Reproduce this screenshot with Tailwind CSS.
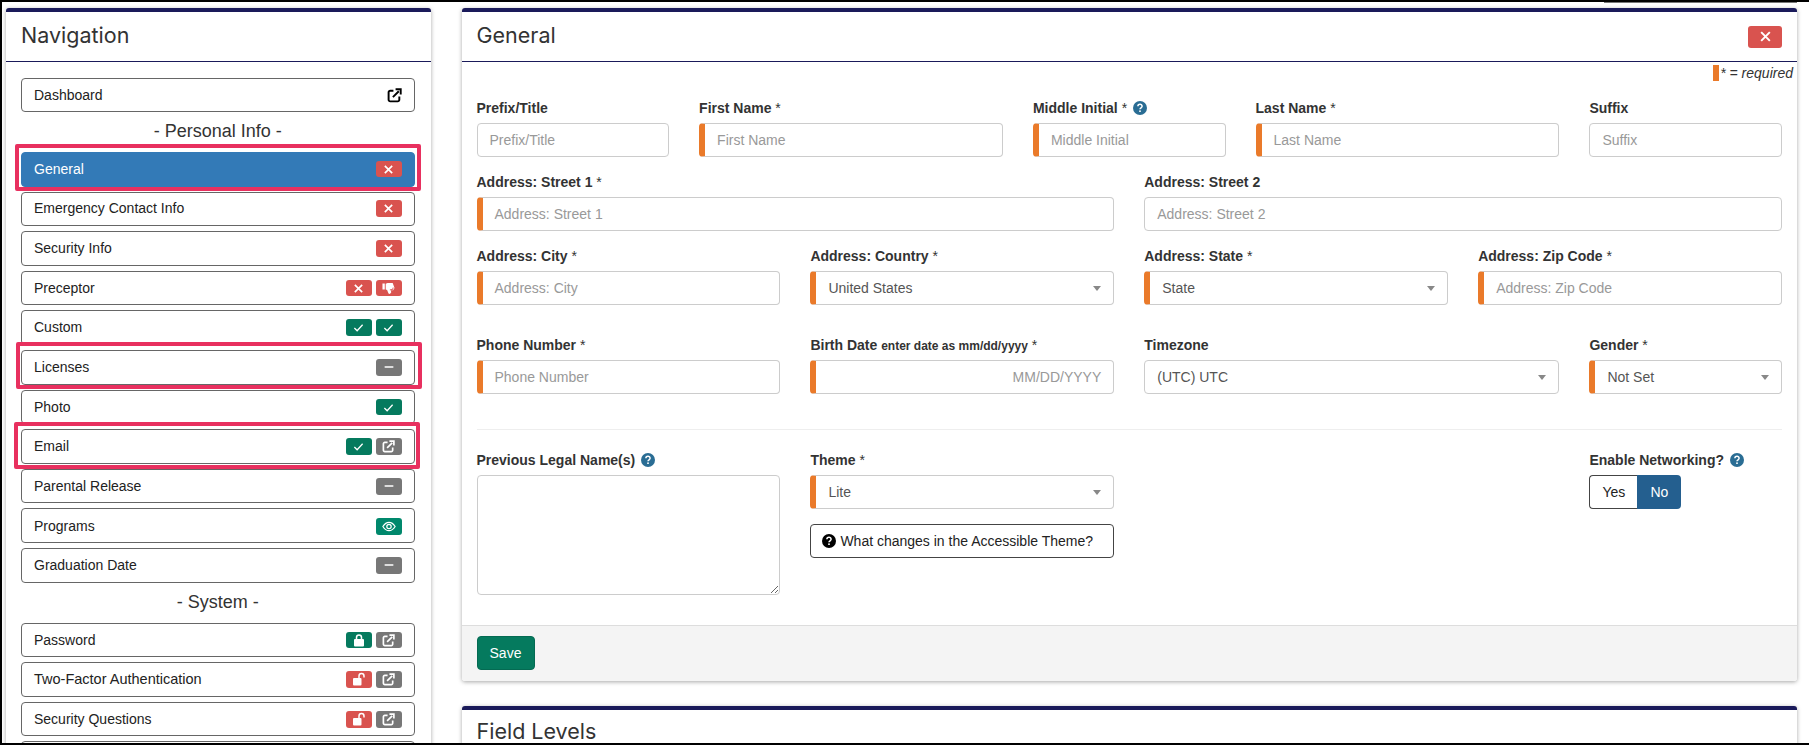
<!DOCTYPE html>
<html lang="en">

<head>
  <meta charset="UTF-8">
  <meta name="viewport" content="width=device-width, initial-scale=1.0">
  <title>Profile - General</title>
  <script src="https://cdn.jsdelivr.net/npm/@tailwindcss/browser@4"></script>
</head>

<body class="h-[745px] overflow-hidden bg-black font-['Liberation_Sans',Arial,sans-serif] text-[#222]">
  <svg class="hidden">
    <symbol id="i-x" viewBox="0 0 12 12"><path d="M2 2l8 8M10 2l-8 8" fill="none" stroke="currentColor" stroke-width="1.8"/></symbol>
    <symbol id="i-check" viewBox="0 0 12 12"><path d="M1.5 6.5l3 3 6-6.5" fill="none" stroke="currentColor" stroke-width="1.4"/></symbol>
    <symbol id="i-minus" viewBox="0 0 12 12"><path d="M1.5 6h9" fill="none" stroke="currentColor" stroke-width="2" stroke-linecap="round"/></symbol>
    <symbol id="i-ext" viewBox="0 0 14 14"><path d="M6 2.500H3A1.500 1.500 0 0 0 1.500 4v7A1.500 1.500 0 0 0 3 12.500h7a1.500 1.500 0 0 0 1.500-1.500V8" fill="none" stroke="currentColor" stroke-width="1.800"/><path d="M5.500 8.500L11 3M8 1.200h4.800V6" fill="none" stroke="currentColor" stroke-width="1.800"/></symbol>
    <symbol id="i-thumb" viewBox="0 0 14 14"><path d="M0.500 1.500h2.500v6.500H0.500zM4 2l2-1h5.500l2 5.500-1.500 2.500H9.500l.5 2-1.500 2-1.500-.5L5.500 8.500 4 8z" fill="currentColor"/><path d="M8.500 8.500l3-.5.500-2" stroke="#d9534f" fill="none"/></symbol>
    <symbol id="i-eye" viewBox="0 0 16 12"><path d="M1 6c2-3.200 4.400-4.800 7-4.800S13 2.800 15 6c-2 3.200-4.400 4.800-7 4.800S3 9.200 1 6z" fill="none" stroke="currentColor" stroke-width="1.400"/><circle cx="8" cy="6" r="2.500" fill="none" stroke="currentColor" stroke-width="1.400"/></symbol>
    <symbol id="i-lock" viewBox="0 0 12 14"><path d="M3.500 6.500V4.500a2.500 2.500 0 0 1 5 0v2" fill="none" stroke="currentColor" stroke-width="1.500"/><rect x="1" y="6" width="10" height="7.500" rx="1" fill="currentColor"/></symbol>
    <symbol id="i-unlock" viewBox="0 0 14 14"><path d="M7 6.500V4a2.500 2.500 0 0 1 5 0v1.500" fill="none" stroke="currentColor" stroke-width="1.500"/><rect x="1" y="6" width="8.500" height="7.500" rx="1" fill="currentColor"/></symbol>
    <symbol id="i-help" viewBox="0 0 14 14"><circle cx="7" cy="7" r="7" fill="currentColor"/><path d="M4.900 5.300A2.100 2 0 0 1 9.100 5.300c0 1.500-2.100 1.500-2.100 3" fill="none" stroke="#fff" stroke-width="1.500"/><rect x="6.200" y="9.400" width="1.600" height="1.600" fill="#fff"/></symbol>
  </svg>

  <div class="mt-[2px] ml-[2px] h-[741px] bg-white overflow-hidden relative flex">
    <div class="absolute top-0 right-[12px] w-[193px] h-[1px] bg-[#777]"></div>

    <!-- Navigation -->
    <aside class="ml-[3.500px] mt-[6px] w-[425px] shrink-0 h-[780px] bg-white rounded-t-[3px] border-t-[4px] border-[#1a1a5a] shadow-[0_1px_4px_rgba(0,0,0,0.35)]">
      <div class="h-[50px] border-b border-[#1a1a5a] pl-[15.500px] flex items-center">
        <h2 class="font-['Inter',sans-serif] text-[21.500px] leading-none text-[#333] relative -top-[1px]">Navigation</h2>
      </div>
      <div class="pl-[15.500px] pr-[16px] pt-[15.500px]">
        <a class="flex items-center justify-between h-[34px] px-[12px] pt-[1px] rounded-[4px] border border-[#666] text-[14px] text-[#222]">Dashboard
          <svg class="w-[15px] h-[15px] text-black"><use href="#i-ext"/></svg>
        </a>
        <h3 class="text-center text-[18px] leading-[39px] h-[40.500px] text-[#333]">- Personal Info -</h3>

        <div class="flex flex-col gap-[5px]">
          <div class="relative">
            <a class="flex items-center justify-between h-[34.600px] px-[12px] rounded-[4px] border border-[#337ab7] bg-[#337ab7] text-[14px] text-white">General
              <span class="flex gap-[4px]"><span class="flex w-[26px] h-[16px] items-center justify-center rounded-[3px] bg-[#d9534f] text-white"><svg class="w-[11px] h-[11px]"><use href="#i-x"/></svg></span></span>
            </a>
            <div class="absolute -top-[8.500px] -left-[6.500px] w-[406px] h-[47px] border-[4px] border-[#e8305f] rounded-[2px]"></div>
          </div>
          <a class="flex items-center justify-between h-[34.600px] px-[12px] rounded-[4px] border border-[#666] text-[14px]">Emergency Contact Info
            <span class="flex gap-[4px]"><span class="flex w-[26px] h-[17px] items-center justify-center rounded-[3px] bg-[#d9534f] text-white"><svg class="w-[11px] h-[11px]"><use href="#i-x"/></svg></span></span>
          </a>
          <a class="flex items-center justify-between h-[34.600px] px-[12px] rounded-[4px] border border-[#666] text-[14px]">Security Info
            <span class="flex gap-[4px]"><span class="flex w-[26px] h-[17px] items-center justify-center rounded-[3px] bg-[#d9534f] text-white"><svg class="w-[11px] h-[11px]"><use href="#i-x"/></svg></span></span>
          </a>
          <a class="flex items-center justify-between h-[34.600px] px-[12px] rounded-[4px] border border-[#666] text-[14px]">Preceptor
            <span class="flex gap-[4px]">
              <span class="flex w-[26px] h-[16px] items-center justify-center rounded-[3px] bg-[#d9534f] text-white"><svg class="w-[11px] h-[11px]"><use href="#i-x"/></svg></span>
              <span class="flex w-[26px] h-[16px] items-center justify-center rounded-[3px] bg-[#d9534f] text-white"><svg class="w-[13px] h-[13px]"><use href="#i-thumb"/></svg></span>
            </span>
          </a>
          <a class="flex items-center justify-between h-[34.600px] px-[12px] rounded-[4px] border border-[#666] text-[14px]">Custom
            <span class="flex gap-[4px]">
              <span class="flex w-[26px] h-[17px] items-center justify-center rounded-[3px] bg-[#057a5e] text-white"><svg class="w-[11px] h-[11px]"><use href="#i-check"/></svg></span>
              <span class="flex w-[26px] h-[17px] items-center justify-center rounded-[3px] bg-[#057a5e] text-white"><svg class="w-[11px] h-[11px]"><use href="#i-check"/></svg></span>
            </span>
          </a>
          <div class="relative">
            <a class="flex items-center justify-between h-[34.600px] px-[12px] rounded-[4px] border border-[#666] text-[14px]">Licenses
              <span class="flex gap-[4px]"><span class="flex w-[26px] h-[17px] items-center justify-center rounded-[3px] bg-[#777] text-white"><svg class="w-[10px] h-[10px]"><use href="#i-minus"/></svg></span></span>
            </a>
            <div class="absolute -top-[7.500px] -left-[5.500px] w-[406px] h-[47px] border-[4px] border-[#e8305f] rounded-[2px]"></div>
          </div>
          <a class="flex items-center justify-between h-[34.600px] px-[12px] pt-[1px] rounded-[4px] border border-[#666] text-[14px]">Photo
            <span class="flex gap-[4px]"><span class="flex w-[26px] h-[16px] items-center justify-center rounded-[3px] bg-[#057a5e] text-white"><svg class="w-[11px] h-[11px]"><use href="#i-check"/></svg></span></span>
          </a>
          <div class="relative">
            <a class="flex items-center justify-between h-[34.600px] px-[12px] rounded-[4px] border border-[#666] text-[14px]">Email
              <span class="flex gap-[4px]">
                <span class="flex w-[26px] h-[17px] items-center justify-center rounded-[3px] bg-[#057a5e] text-white"><svg class="w-[11px] h-[11px]"><use href="#i-check"/></svg></span>
                <span class="flex w-[26px] h-[17px] items-center justify-center rounded-[3px] bg-[#777] text-white"><svg class="w-[13px] h-[13px]"><use href="#i-ext"/></svg></span>
              </span>
            </a>
            <div class="absolute -top-[7.500px] -left-[7.500px] w-[406px] h-[47px] border-[4px] border-[#e8305f] rounded-[2px]"></div>
          </div>
          <a class="flex items-center justify-between h-[34.600px] px-[12px] rounded-[4px] border border-[#666] text-[14px]">Parental Release
            <span class="flex gap-[4px]"><span class="flex w-[26px] h-[17px] items-center justify-center rounded-[3px] bg-[#777] text-white"><svg class="w-[10px] h-[10px]"><use href="#i-minus"/></svg></span></span>
          </a>
          <a class="flex items-center justify-between h-[34.600px] px-[12px] pt-[1px] rounded-[4px] border border-[#666] text-[14px]">Programs
            <span class="flex gap-[4px]"><span class="flex w-[26px] h-[17px] items-center justify-center rounded-[3px] bg-[#00886c] text-white"><svg class="w-[14px] h-[11px]"><use href="#i-eye"/></svg></span></span>
          </a>
          <a class="flex items-center justify-between h-[34.600px] px-[12px] rounded-[4px] border border-[#666] text-[14px]">Graduation Date
            <span class="flex gap-[4px]"><span class="flex w-[26px] h-[17px] items-center justify-center rounded-[3px] bg-[#777] text-white"><svg class="w-[10px] h-[10px]"><use href="#i-minus"/></svg></span></span>
          </a>
        </div>

        <h3 class="text-center text-[18px] leading-[38px] h-[40px] text-[#333]">- System -</h3>

        <div class="flex flex-col gap-[5px]">
          <a class="flex items-center justify-between h-[34.600px] px-[12px] pt-[1px] rounded-[4px] border border-[#666] text-[14px]">Password
            <span class="flex gap-[4px]">
              <span class="flex w-[26px] h-[16px] items-center justify-center rounded-[3px] bg-[#057a5e] text-white"><svg class="w-[12px] h-[14px]"><use href="#i-lock"/></svg></span>
              <span class="flex w-[26px] h-[16px] items-center justify-center rounded-[3px] bg-[#777] text-white"><svg class="w-[13px] h-[13px]"><use href="#i-ext"/></svg></span>
            </span>
          </a>
          <a class="flex items-center justify-between h-[34.600px] px-[12px] rounded-[4px] border border-[#666] text-[14.500px]">Two-Factor Authentication
            <span class="flex gap-[4px]">
              <span class="flex w-[26px] h-[17px] items-center justify-center rounded-[3px] bg-[#d9534f] text-white"><svg class="w-[14px] h-[14px]"><use href="#i-unlock"/></svg></span>
              <span class="flex w-[26px] h-[17px] items-center justify-center rounded-[3px] bg-[#777] text-white"><svg class="w-[13px] h-[13px]"><use href="#i-ext"/></svg></span>
            </span>
          </a>
          <a class="flex items-center justify-between h-[34.600px] px-[12px] rounded-[4px] border border-[#666] text-[14px]">Security Questions
            <span class="flex gap-[4px]">
              <span class="flex w-[26px] h-[17px] items-center justify-center rounded-[3px] bg-[#d9534f] text-white"><svg class="w-[14px] h-[14px]"><use href="#i-unlock"/></svg></span>
              <span class="flex w-[26px] h-[17px] items-center justify-center rounded-[3px] bg-[#777] text-white"><svg class="w-[13px] h-[13px]"><use href="#i-ext"/></svg></span>
            </span>
          </a>
          <div class="h-[34.600px] rounded-[4px] border border-[#666]"></div>
        </div>
      </div>
    </aside>

    <!-- General form -->
    <main class="ml-[31px] mt-[6px] w-[1335.500px] shrink-0">
      <section class="bg-white rounded-[3px] border-t-[4px] border-[#1a1a5a] shadow-[0_1px_4px_rgba(0,0,0,0.35)]">
        <div class="h-[50px] border-b border-[#1a1a5a] pl-[15px] pr-[15px] flex items-center justify-between">
          <h2 class="font-['Inter',sans-serif] text-[21.500px] leading-none text-[#333] relative -top-[1px]">General</h2>
          <button class="flex w-[34px] h-[22px] items-center justify-center rounded-[3px] bg-[#d9534f] text-white"><svg class="w-[13px] h-[13px]"><use href="#i-x"/></svg></button>
        </div>

        <div class="relative h-[563px] px-[15px]">
          <div class="absolute top-[3px] right-[4px] flex items-start text-[14px] italic leading-[16px] text-[#333]">
            <span class="w-[6px] h-[16px] bg-[#ea7a2a] mr-[1px]"></span>* = required
          </div>

          <div class="grid grid-cols-12 gap-x-[30px] pt-[37px]">
            <div class="col-span-2">
              <label class="block h-[24px] text-[14px] font-bold leading-[18px] text-[#333]">Prefix/Title</label>
              <div class="h-[34px] rounded-[4px] border border-[#ccc] px-[12px] flex items-center text-[14px] text-[#999]">Prefix/Title</div>
            </div>
            <div class="col-span-3">
              <label class="block h-[24px] text-[14px] font-bold leading-[18px] text-[#333]">First Name <span class="font-normal">*</span></label>
              <div class="h-[34px] rounded-[4px] border border-[#ccc] border-l-[6px] border-l-[#ea7a2a] pl-[12px] flex items-center text-[14px] text-[#999]">First Name</div>
            </div>
            <div class="col-span-2">
              <label class="flex items-center gap-[6px] h-[18px] mb-[6px] text-[14px] font-bold leading-[18px] text-[#333]"><span>Middle Initial <span class="font-normal">*</span></span><svg class="w-[14px] h-[14px] text-[#2a6d94]"><use href="#i-help"/></svg></label>
              <div class="h-[34px] rounded-[4px] border border-[#ccc] border-l-[6px] border-l-[#ea7a2a] pl-[12px] flex items-center text-[14px] text-[#999]">Middle Initial</div>
            </div>
            <div class="col-span-3">
              <label class="block h-[24px] text-[14px] font-bold leading-[18px] text-[#333]">Last Name <span class="font-normal">*</span></label>
              <div class="h-[34px] rounded-[4px] border border-[#ccc] border-l-[6px] border-l-[#ea7a2a] pl-[12px] flex items-center text-[14px] text-[#999]">Last Name</div>
            </div>
            <div class="col-span-2">
              <label class="block h-[24px] text-[14px] font-bold leading-[18px] text-[#333]">Suffix</label>
              <div class="h-[34px] rounded-[4px] border border-[#ccc] px-[12px] flex items-center text-[14px] text-[#999]">Suffix</div>
            </div>
          </div>

          <div class="grid grid-cols-12 gap-x-[30px] pt-[16px]">
            <div class="col-span-6">
              <label class="block h-[24px] text-[14px] font-bold leading-[18px] text-[#333]">Address: Street 1 <span class="font-normal">*</span></label>
              <div class="h-[34px] rounded-[4px] border border-[#ccc] border-l-[6px] border-l-[#ea7a2a] pl-[12px] flex items-center text-[14px] text-[#999]">Address: Street 1</div>
            </div>
            <div class="col-span-6">
              <label class="block h-[24px] text-[14px] font-bold leading-[18px] text-[#333]">Address: Street 2</label>
              <div class="h-[34px] rounded-[4px] border border-[#ccc] px-[12px] flex items-center text-[14px] text-[#999]">Address: Street 2</div>
            </div>
          </div>

          <div class="grid grid-cols-12 gap-x-[30px] pt-[16px]">
            <div class="col-span-3">
              <label class="block h-[24px] text-[14px] font-bold leading-[18px] text-[#333]">Address: City <span class="font-normal">*</span></label>
              <div class="h-[34px] rounded-[4px] border border-[#ccc] border-l-[6px] border-l-[#ea7a2a] pl-[12px] flex items-center text-[14px] text-[#999]">Address: City</div>
            </div>
            <div class="col-span-3">
              <label class="block h-[24px] text-[14px] font-bold leading-[18px] text-[#333]">Address: Country <span class="font-normal">*</span></label>
              <div class="h-[34px] rounded-[4px] border border-[#ccc] border-l-[6px] border-l-[#ea7a2a] pl-[12px] pr-[12px] flex items-center justify-between text-[14px] text-[#555]">United States<span class="w-0 h-0 border-x-[4px] border-x-transparent border-t-[5px] border-t-[#888]"></span></div>
            </div>
            <div class="col-span-3">
              <label class="block h-[24px] text-[14px] font-bold leading-[18px] text-[#333]">Address: State <span class="font-normal">*</span></label>
              <div class="h-[34px] rounded-[4px] border border-[#ccc] border-l-[6px] border-l-[#ea7a2a] pl-[12px] pr-[12px] flex items-center justify-between text-[14px] text-[#555]">State<span class="w-0 h-0 border-x-[4px] border-x-transparent border-t-[5px] border-t-[#888]"></span></div>
            </div>
            <div class="col-span-3">
              <label class="block h-[24px] text-[14px] font-bold leading-[18px] text-[#333]">Address: Zip Code <span class="font-normal">*</span></label>
              <div class="h-[34px] rounded-[4px] border border-[#ccc] border-l-[6px] border-l-[#ea7a2a] pl-[12px] flex items-center text-[14px] text-[#999]">Address: Zip Code</div>
            </div>
          </div>

          <div class="grid grid-cols-12 gap-x-[30px] pt-[31px]">
            <div class="col-span-3">
              <label class="block h-[24px] text-[14px] font-bold leading-[18px] text-[#333]">Phone Number <span class="font-normal">*</span></label>
              <div class="h-[34px] rounded-[4px] border border-[#ccc] border-l-[6px] border-l-[#ea7a2a] pl-[12px] flex items-center text-[14px] text-[#999]">Phone Number</div>
            </div>
            <div class="col-span-3">
              <label class="block h-[24px] text-[14px] font-bold leading-[18px] text-[#333]">Birth Date <span class="text-[12px]">enter date as mm/dd/yyyy</span> <span class="font-normal">*</span></label>
              <div class="h-[34px] rounded-[4px] border border-[#ccc] border-l-[6px] border-l-[#ea7a2a] pr-[12px] flex items-center justify-end text-[14px] text-[#999]">MM/DD/YYYY</div>
            </div>
            <div class="col-span-4">
              <label class="block h-[24px] text-[14px] font-bold leading-[18px] text-[#333]">Timezone</label>
              <div class="h-[34px] rounded-[4px] border border-[#ccc] px-[12px] flex items-center justify-between text-[14px] text-[#555]">(UTC) UTC<span class="w-0 h-0 border-x-[4px] border-x-transparent border-t-[5px] border-t-[#888]"></span></div>
            </div>
            <div class="col-span-2">
              <label class="block h-[24px] text-[14px] font-bold leading-[18px] text-[#333]">Gender <span class="font-normal">*</span></label>
              <div class="h-[34px] rounded-[4px] border border-[#ccc] border-l-[6px] border-l-[#ea7a2a] pl-[12px] pr-[12px] flex items-center justify-between text-[14px] text-[#555]">Not Set<span class="w-0 h-0 border-x-[4px] border-x-transparent border-t-[5px] border-t-[#888]"></span></div>
            </div>
          </div>

          <hr class="mt-[35px] border-[#eee]">

          <div class="grid grid-cols-12 gap-x-[30px] pt-[21px]">
            <div class="col-span-3">
              <label class="flex items-center gap-[6px] h-[18px] mb-[6px] text-[14px] font-bold leading-[18px] text-[#333]">Previous Legal Name(s)<svg class="w-[14px] h-[14px] text-[#2a6d94]"><use href="#i-help"/></svg></label>
              <textarea class="block w-full h-[120px] rounded-[4px] border border-[#ccc]"></textarea>
            </div>
            <div class="col-span-3">
              <label class="block h-[24px] text-[14px] font-bold leading-[18px] text-[#333]">Theme <span class="font-normal">*</span></label>
              <div class="h-[34px] rounded-[4px] border border-[#ccc] border-l-[6px] border-l-[#ea7a2a] pl-[12px] pr-[12px] flex items-center justify-between text-[14px] text-[#555]">Lite<span class="w-0 h-0 border-x-[4px] border-x-transparent border-t-[5px] border-t-[#888]"></span></div>
              <button class="mt-[15px] w-full h-[34px] pl-[11px] rounded-[4px] border border-[#444] flex items-center gap-[4px] text-[14px] text-[#222] whitespace-nowrap"><svg class="w-[14px] h-[14px] text-black"><use href="#i-help"/></svg>What changes in the Accessible Theme?</button>
            </div>
            <div class="col-span-4"></div>
            <div class="col-span-2">
              <label class="flex items-center gap-[6px] h-[18px] mb-[6px] text-[14px] font-bold leading-[18px] text-[#333] whitespace-nowrap">Enable Networking?<svg class="w-[14px] h-[14px] text-[#2a6d94]"><use href="#i-help"/></svg></label>
              <div class="flex w-[92px] h-[34px] text-[14px]">
                <span class="w-[48px] flex items-center justify-center rounded-l-[4px] border border-[#444] border-r-0">Yes</span>
                <span class="w-[44px] flex items-center justify-center rounded-r-[4px] bg-[#245f8f] text-white">No</span>
              </div>
            </div>
          </div>
        </div>

        <div class="h-[56px] bg-[#f4f4f4] border-t border-[#ddd] rounded-b-[3px] pl-[15px] pt-[10px]">
          <button class="w-[58px] h-[34px] rounded-[4px] bg-[#057a5e] border border-[#046a52] text-[14px] text-white">Save</button>
        </div>
      </section>

      <section class="mt-[25px] h-[60px] bg-white rounded-t-[3px] border-t-[4px] border-[#1a1a5a] shadow-[0_1px_4px_rgba(0,0,0,0.35)] pl-[15px] pt-[8px]">
        <h2 class="font-['Inter',sans-serif] text-[21.500px] leading-[26px] text-[#333]">Field Levels</h2>
      </section>
    </main>
  </div>
</body>

</html>
